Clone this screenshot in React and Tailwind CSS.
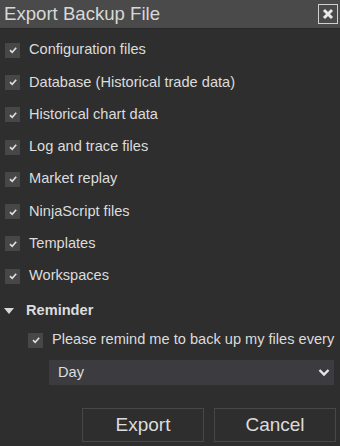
import { useState } from "react"

const items = [
  "Configuration files",
  "Database (Historical trade data)",
  "Historical chart data",
  "Log and trace files",
  "Market replay",
  "NinjaScript files",
  "Templates",
  "Workspaces",
]

function Check({ checked }) {
  return (
    <span className="flex h-[15px] w-[15px] shrink-0 items-center justify-center bg-[#474747]">
      {checked && (
        <svg width="10" height="10" viewBox="0 0 10 10">
          <path d="M2 5.2 L4.2 7.3 L8.2 2.8" fill="none" stroke="#e0e0e0" strokeWidth="1.6" />
        </svg>
      )}
    </span>
  )
}

export default function App() {
  const [checked, setChecked] = useState(items.map(() => true))
  const [remind, setRemind] = useState(true)

  return (
    <div className="flex h-[446px] w-[340px] flex-col bg-[#2e2e2e] text-[#dcdcdc] font-['Liberation_Sans',Arial,sans-serif]">
      {/* title bar */}
      <div className="flex h-[29px] shrink-0 items-center justify-between border-b border-[#262626] bg-[#4a4a4a] pl-[4px] pr-[2px]">
        <span className="text-[18.6px] text-[#d8d8d8]">Export Backup File</span>
        <button className="flex h-[20px] w-[20px] items-center justify-center border border-[#cfcfcf]">
          <svg width="12" height="12" viewBox="0 0 12 12">
            <path d="M2 2 L10 10 M10 2 L2 10" stroke="#e8e8e8" strokeWidth="3" />
          </svg>
        </button>
      </div>

      {/* file list */}
      <div className="flex flex-col pt-[5px]">
        {items.map((label, i) => (
          <label
            key={label}
            className="flex h-[32.3px] items-center gap-[9px] pl-[5px] text-[14.6px]"
            onClick={() => setChecked(checked.map((c, j) => (j === i ? !c : c)))}
          >
            <Check checked={checked[i]} />
            <span>{label}</span>
          </label>
        ))}
      </div>

      {/* reminder */}
      <div className="mt-[8px] flex items-center gap-[12px] pl-[4px]">
        <svg width="10" height="6" viewBox="0 0 10 6">
          <path d="M0 0 L10 0 L5 6 Z" fill="#d8d8d8" />
        </svg>
        <span className="text-[14.6px] font-bold">Reminder</span>
      </div>
      <div className="mt-[7px] flex items-center gap-[9px] pl-[28px] text-[14.6px]" onClick={() => setRemind(!remind)}>
        <Check checked={remind} />
        <span>Please remind me to back up my files every</span>
      </div>
      <div className="mt-[9px] ml-[49px] mr-[6px] flex h-[25px] items-center justify-between bg-[#3c3c40] pl-[9px] pr-[4px] text-[14.6px]">
        <span>Day</span>
        <svg width="12" height="9" viewBox="0 0 12 9">
          <path d="M1.5 2 L6 6.5 L10.5 2" fill="none" stroke="#e6e6e6" strokeWidth="2.4" />
        </svg>
      </div>

      {/* buttons */}
      <div className="mt-auto mb-[4px] flex justify-end gap-[10px] pr-[4px]">
        <button className="h-[34px] w-[122px] border border-[#474747] text-[19px] text-[#dcdcdc]">Export</button>
        <button className="h-[34px] w-[122px] border border-[#474747] text-[19px] text-[#dcdcdc]">Cancel</button>
      </div>
    </div>
  )
}
